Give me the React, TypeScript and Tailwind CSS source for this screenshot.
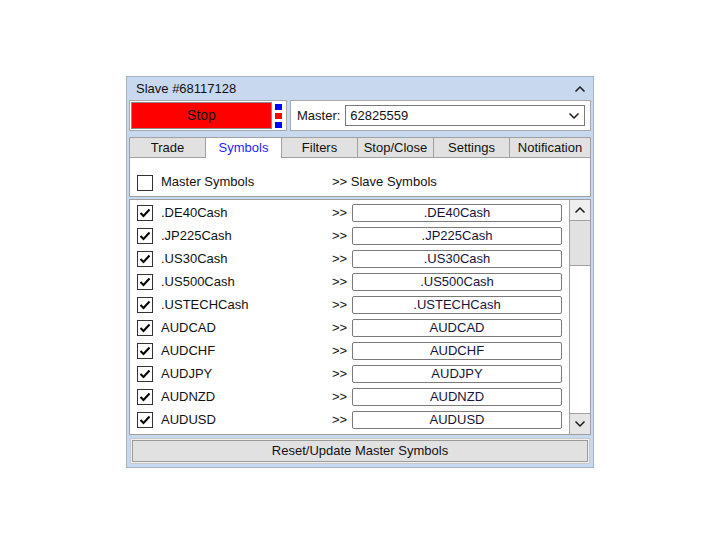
import React from "react";

const TABS = ["Trade", "Symbols", "Filters", "Stop/Close", "Settings", "Notification"];

const SYMBOLS = [
  ".DE40Cash", ".JP225Cash", ".US30Cash", ".US500Cash", ".USTECHCash",
  "AUDCAD", "AUDCHF", "AUDJPY", "AUDNZD", "AUDUSD",
];

function Chevron({ up }: { up?: boolean }) {
  return (
    <svg width="12" height="8" viewBox="0 0 12 8" className="shrink-0">
      <path
        d={up ? "M1.5 6.5 L6 2 L10.5 6.5" : "M1.5 1.5 L6 6 L10.5 1.5"}
        fill="none"
        stroke="#1a1a1a"
        strokeWidth="1.5"
      />
    </svg>
  );
}

function Check({ checked }: { checked: boolean }) {
  return (
    <div className="w-[16px] h-[16px] border border-[#333] bg-white flex items-center justify-center shrink-0">
      {checked && (
        <svg width="12" height="10" viewBox="0 0 12 10">
          <path d="M1.5 5 L4.5 8 L10.5 1.5" fill="none" stroke="#000" strokeWidth="2" />
        </svg>
      )}
    </div>
  );
}

export default function App() {
  return (
    <div
      className="w-[720px] h-[540px] bg-white pt-[76px] pl-[126px] text-[13px] text-[#111]"
      style={{ fontFamily: '"Liberation Sans", Arial, sans-serif' }}
    >
      <div className="w-[468px] h-[392px] border border-[#a7b3c4] bg-[#c8d8ee] flex flex-col px-[2px]">
        {/* title */}
        <div className="h-[23px] flex items-center justify-between pl-[7px] pr-[5px]">
          <span>Slave #68117128</span>
          <Chevron up />
        </div>

        {/* stop + master */}
        <div className="h-[31px] flex gap-[3px]">
          <div className="w-[158px] bg-white border border-[#a9a9a9] flex items-center pl-[1px] gap-[3px]">
            <div className="w-[141px] h-[27px] bg-[#ff0000] border border-[#8c8c8c] flex items-center justify-center text-[14px]">
              Stop
            </div>
            <div className="flex flex-col gap-[3px]">
              <div className="w-[7px] h-[6px] bg-[#0000ff]" />
              <div className="w-[7px] h-[6px] bg-[#ff0000]" />
              <div className="w-[7px] h-[6px] bg-[#0000ff]" />
            </div>
          </div>
          <div className="flex-1 bg-white border border-[#a9a9a9] flex items-center pl-[6px] pr-[5px] gap-[5px]">
            <span>Master:</span>
            <div className="flex-1 h-[21px] border border-[#7a7a7a] flex items-center justify-between pl-[4px] pr-[4px]">
              <span>62825559</span>
              <Chevron />
            </div>
          </div>
        </div>

        {/* tabs */}
        <div className="mt-[6px] h-[21px] flex">
          {TABS.map((t, i) => (
            <div
              key={t}
              className={`${i === 5 ? "flex-1" : "w-[76px]"} flex items-center justify-center border-t border-l border-[#a0a0a0] ${
                i === 5 ? "border-r" : ""
              } ${t === "Symbols" ? "bg-white text-[#1f1fff]" : "bg-[#e1e1e1] border-b"}`}
            >
              {t}
            </div>
          ))}
        </div>

        {/* header */}
        <div className="h-[39px] bg-white border-x border-b border-[#a0a0a0] flex items-end pb-[5px] pl-[7px]">
          <Check checked={false} />
          <span className="ml-[8px] w-[171px]">Master Symbols</span>
          <span>&gt;&gt; Slave Symbols</span>
        </div>

        {/* list */}
        <div className="mt-[2px] h-[236px] bg-white border border-[#a0a0a0] flex">
          <div className="flex-1 flex flex-col pt-[1px] pl-[7px]">
            {SYMBOLS.map((s) => (
              <div key={s} className="h-[23px] flex items-center">
                <Check checked />
                <span className="ml-[8px] w-[171px]">{s}</span>
                <span className="w-[20px]">&gt;&gt;</span>
                <div className="w-[210px] h-[18px] border border-[#7a7a7a] rounded-[2px] flex items-center justify-center text-[#14143c]">
                  {s}
                </div>
              </div>
            ))}
          </div>
          <div className="w-[21px] border-l border-[#a0a0a0] flex flex-col">
            <div className="h-[21px] bg-[#efefef] border-b border-[#a0a0a0] flex items-center justify-center">
              <Chevron up />
            </div>
            <div className="h-[45px] bg-[#e1e1e1] border-b border-[#a0a0a0]" />
            <div className="flex-1" />
            <div className="h-[21px] bg-[#e5e5e5] border-t border-[#a0a0a0] flex items-center justify-center">
              <Chevron />
            </div>
          </div>
        </div>

        {/* bottom button */}
        <div className="mt-[3px] h-[26px] mx-[1px] border border-[#c9c9c9] bg-[#f0f0f0] p-px">
          <div className="h-full bg-[#e1e1e1] border border-[#9a9a9a] flex items-center justify-center">
            Reset/Update Master Symbols
          </div>
        </div>
      </div>
    </div>
  );
}
